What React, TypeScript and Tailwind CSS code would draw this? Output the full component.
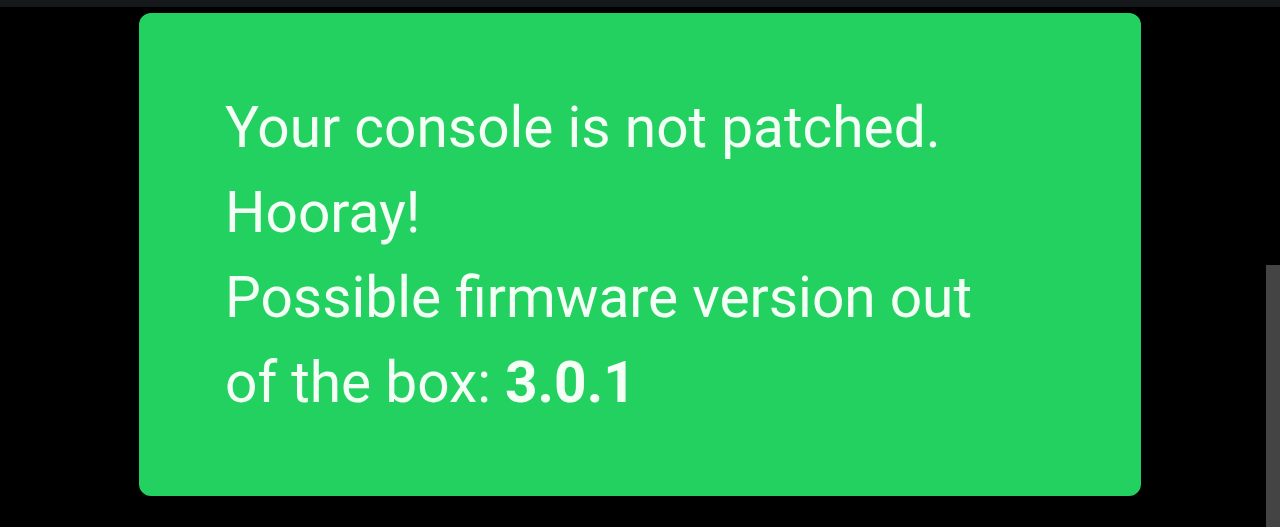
export default function App() {
  return (
    <div className="relative h-[527px] w-full overflow-hidden bg-black" style={{ fontFamily: 'Roboto, "Liberation Sans", sans-serif' }}>
      <div className="h-[7px] w-full bg-[#15191b]" />
      <div className="mt-[6px] ml-[139px] w-[1002px] h-[483px] rounded-[12px] bg-[#23d160] pl-[86px] pt-[72px] text-[56.8px] leading-[85px] text-[#f4fff6]">
        <p>Your console is not patched.</p>
        <p>Hooray!</p>
        <p>Possible firmware version out</p>
        <p>
          of the box: <span className="font-bold">3.0.1</span>
        </p>
      </div>
      {/* scrollbar thumb */}
      <div className="absolute right-0 top-[265px] bottom-0 w-[14px] bg-[#444444]" />
    </div>
  );
}
